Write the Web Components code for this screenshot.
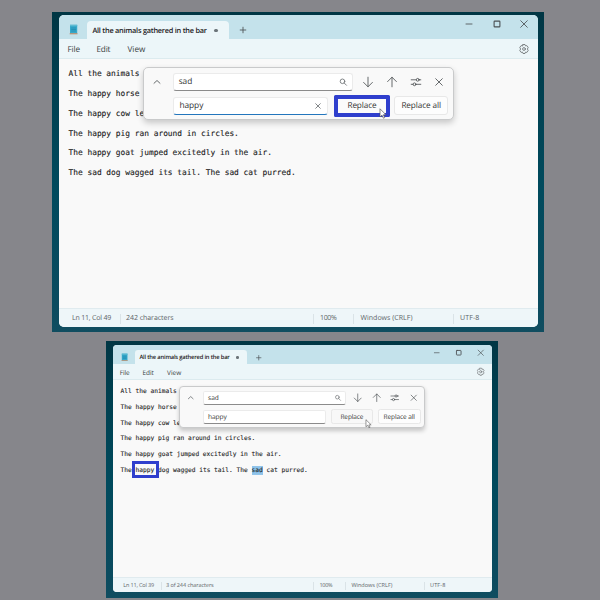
<!DOCTYPE html>
<html lang="en">
<head>
<meta charset="utf-8">
<title>Notepad replace</title>
<style>
html,body{margin:0;height:100%;overflow:hidden}
body{width:600px;height:600px;background:#86868b;font-family:"Open Sans","Noto Sans",sans-serif;display:flex;flex-direction:column;align-items:flex-start;box-sizing:border-box;padding-top:12px}
desktop-frame:nth-of-type(1){margin-left:52px}
desktop-frame:nth-of-type(2){margin:9px 0 0 106px}
</style>
</head>
<body>
<desktop-frame style="width:491.5px;height:320px;padding:3px 5px 4.5px 7px">
  <notepad-window cursor="Ln 11, Col 49" cw="39" count="242 characters" nw="47.5">
    <doc-line text="All the animals"></doc-line>
    <doc-line text="The happy horse"></doc-line>
    <doc-line text="The happy cow le"></doc-line>
    <doc-line text="The happy pig ran around in circles."></doc-line>
    <doc-line text="The happy goat jumped excitedly in the air."></doc-line>
    <doc-line text="The sad dog wagged its tail. The sad cat purred."></doc-line>
    <find-panel slot="panel" active></find-panel>
  </notepad-window>
</desktop-frame>
<desktop-frame style="width:391.5px;height:257px;padding:4.3px 5.5px 5.7px 7px">
  <notepad-window style="zoom:.791" cursor="Ln 11, Col 39" cw="39" count="3 of 244 characters" nw="60.5">
    <doc-line text="All the animals"></doc-line>
    <doc-line text="The happy horse"></doc-line>
    <doc-line text="The happy cow le"></doc-line>
    <doc-line text="The happy pig ran around in circles."></doc-line>
    <doc-line text="The happy goat jumped excitedly in the air."></doc-line>
    <doc-line text="The happy dog wagged its tail. The sad cat purred." mark="happy" select="sad"></doc-line>
    <find-panel slot="panel"></find-panel>
  </notepad-window>
</desktop-frame>
<script>
const pen = document.createElement('canvas').getContext('2d');
function shadow(el, html){ el.attachShadow({mode:'open'}).innerHTML = html; }

/* A one-line label whose tracking is set so that it fills the width w. */
customElements.define('ui-label', class extends HTMLElement {
  connectedCallback(){
    const t = this.getAttribute('text'), w = +this.getAttribute('w'),
          s = +this.getAttribute('size') || 8, wt = this.getAttribute('weight') || 400;
    pen.font = `${wt} 100px "Open Sans"`;
    const ls = (w - pen.measureText(t).width * s / 100) / t.length;
    shadow(this, `<style>:host{display:block;flex:none;width:${w}px;white-space:nowrap;line-height:12px;
      font-size:${s}px;font-weight:${wt};letter-spacing:${ls.toFixed(3)}px;text-rendering:geometricPrecision}</style>${t}`);
  }
});

const GLYPHS = {
  chevron:'<path d="M3 7.3 6 4.5 9 7.3"/>',
  search:'<circle cx="5.5" cy="5.3" r="2.3"/><path d="M7.2 7 9.5 9.3"/>',
  down:'<path d="M6 1.2V10.7M1.6 6.4 6 10.8 10.4 6.4"/>',
  up:'<path d="M6 10.8V1.3M1.6 5.6 6 1.2 10.4 5.6"/>',
  filter:'<path d="M1.2 3.8H6.2M9.2 3.8H10.8M1.2 8.3H3M6 8.3H10.8"/><circle cx="7.7" cy="3.8" r="1.4"/><circle cx="4.5" cy="8.3" r="1.4"/>',
  close:'<path d="M2.7 2.7 9.3 9.3M9.3 2.7 2.7 9.3"/>',
  clear:'<path d="M3.7 3.7 8.3 8.3M8.3 3.7 3.7 8.3"/>',
  min:'<path d="M3 6H9"/>',
  max:'<rect x="3.1" y="3.1" width="5.8" height="5.8" rx=".7" stroke-width="1.1"/>',
  plus:'<path d="M6 3.2V8.8M3.2 6H8.8"/>',
  gear:'<path d="M5 1.5 7 1.5 7.5 2.9 8.9 2.6 10.2 4.4 9.4 6 10.2 7.6 8.9 9.4 7.5 9.1 7 10.5H5L4.5 9.1 3.1 9.4 1.8 7.6 2.6 6 1.8 4.4 3.1 2.6 4.5 2.9Z"/><circle cx="6" cy="6" r="1.4"/>'
};
customElements.define('ui-icon', class extends HTMLElement {
  connectedCallback(){
    shadow(this, `<style>:host{display:block;flex:none;width:12px;height:12px;color:#4b5053}
    :host([name=clear]),:host([name=search]),:host([name=gear]){color:#6d7174}svg{display:block;width:100%;height:100%}</style>
    <svg viewBox="0 0 12 12" fill="none" stroke="currentColor" stroke-width=".85" stroke-linecap="round" stroke-linejoin="round">${GLYPHS[this.getAttribute('name')]}</svg>`);
  }
});

customElements.define('notepad-logo', class extends HTMLElement {
  connectedCallback(){
    shadow(this, `<style>:host{display:block;flex:none;width:9px;height:11px}svg{display:block}</style>
    <svg width="9" height="11" viewBox="0 0 9 11"><rect x="1" y=".8" width="7.2" height="8.6" fill="#35a9cb"/><rect x="1" y=".8" width="7.2" height="1.4" fill="#5dbbd2"/><path d="M2.2 4H7M2.2 5.5H7M2.2 7H7" stroke="#1f86ad" stroke-width=".7"/><rect x=".7" y="9.2" width="7.8" height="1.1" fill="#b98a68"/></svg>`);
  }
});

customElements.define('desktop-frame', class extends HTMLElement {
  connectedCallback(){
    shadow(this, `<style>:host{display:block;flex:none;box-sizing:border-box;
      background:linear-gradient(#003644,#003f4f 20%,#004a5d 55%,#0b4b5f 92%,#104d60)}</style><slot></slot>`);
  }
});

customElements.define('doc-line', class extends HTMLElement {
  connectedCallback(){
    let t = this.getAttribute('text');
    const m = this.getAttribute('mark'), s = this.getAttribute('select');
    if (m) t = t.replace(m, `<span class="mark">${m}</span>`);
    if (s) t = t.replace(s, `<span class="sel">${s}</span>`);
    shadow(this, `<style>:host{display:block;height:19.8px;line-height:19.8px;white-space:pre;
      font-family:"DejaVu Sans Mono",monospace;font-size:7.87px;color:#222;-webkit-text-stroke:.12px #222;text-rendering:geometricPrecision}
      .mark{position:relative}
      .mark::after{content:"";position:absolute;left:-4.6px;right:-5.8px;top:-7.2px;bottom:-5.4px;border:4px solid #2f3fcd}
      .sel{background:linear-gradient(#8dc3ea,#8dc3ea) 0 100%/100% 100% no-repeat;box-shadow:0 1.2px #8dc3ea,0 -1.2px #8dc3ea}</style>${t}`);
  }
});

customElements.define('find-panel', class extends HTMLElement {
  connectedCallback(){
    const on = this.hasAttribute('active');
    shadow(this, `<style>
    :host{display:flex;flex-direction:column;gap:${on?6:5.5}px;box-sizing:border-box;width:311px;height:53px;padding:4.5px 5px 5px;
      background:#f9f9f9;border:1px solid #c9cacb;border-radius:5px;box-shadow:0 3px 6px rgba(0,0,0,.2);color:#333}
    .row{display:flex;align-items:center;height:18px;flex:none}
    .row.top{padding-left:1.5px}
    .row.bot{padding-left:${on?24.4:23.5}px}
    .box{display:flex;align-items:center;justify-content:space-between;box-sizing:border-box;height:18px;background:#fff;
      border:1px solid #ebebeb;border-bottom-color:#8b8b8b;border-radius:3px;padding:0 3px 0 5px}
    .q{width:180.5px;margin-left:10.2px}
    .r{width:155.5px;margin-left:0}
    .r.on{border-bottom:1.6px solid #2376bd}
    .icons{display:flex;gap:11.7px;margin-left:9px}
    .btn{position:relative;display:flex;align-items:center;justify-content:center;box-sizing:border-box;height:18.5px;background:#fdfdfd;border:1px solid #e8e8e8;border-radius:3px}
    .one{width:53px;margin-left:7px;background:#f8f8f8}
    .one.on{width:57px;height:22px;margin-left:5.6px;border:4px solid #2f3fcd;border-radius:1.5px;background:#fbfbfb}
    .all{width:54px;margin-left:${on?'4':'6.5'}px}
    .cursor{position:absolute;right:${on?'-1px':'0'};bottom:${on?'-6.5px':'-7px'};width:${on?8:9}px;height:${on?11:12}px}
    </style>
    <div class="row top"><ui-icon name="chevron"></ui-icon>
      <div class="box q"><ui-label text="sad" w="13.5" size="8.3"></ui-label><ui-icon name="search"></ui-icon></div>
      <div class="icons"><ui-icon name="down"></ui-icon><ui-icon name="up"></ui-icon><ui-icon name="filter"></ui-icon><ui-icon name="close"></ui-icon></div></div>
    <div class="row bot"><div class="box r ${on?'on':''}"><ui-label text="happy" w="24" size="8.4"></ui-label>${on?'<ui-icon name="clear"></ui-icon>':''}</div>
      <div class="btn one ${on?'on':''}"><ui-label text="Replace" w="29" size="8.2"></ui-label>
        <svg class="cursor" viewBox="0 0 8 11"><path d="M1 .8V9L3 7.2 4.4 10.2 5.7 9.6 4.4 6.8H7Z" fill="#fff" stroke="#555" stroke-width=".7"/></svg></div>
      <div class="btn all"><ui-label text="Replace all" w="39.5" size="8.2"></ui-label></div></div>`);
  }
});

customElements.define('notepad-window', class extends HTMLElement {
  connectedCallback(){
    const a = n => this.getAttribute(n);
    shadow(this, `<style>
    :host{position:relative;display:flex;flex-direction:column;box-sizing:border-box;width:479px;height:312.3px;background:#f9f9f9;border-radius:5px;overflow:hidden;color:#3a3f42}
    .title{display:flex;height:24px;flex:none;background:#c4e2eb}
    notepad-logo{margin:9.3px 9.5px 0 9.7px}
    .tab{display:flex;align-items:center;box-sizing:border-box;width:141.5px;height:18px;margin-top:6px;padding:1px 0 0 5.2px;background:#ecf6f9;border-radius:4px 4px 0 0;color:#1c2023}
    .dot{width:3.4px;height:3.4px;border-radius:50%;background:#6c757a;margin-left:7.5px}
    .plus{margin:9.2px 0 0 8.7px}
    .ctl{display:flex;gap:15.8px;margin:2.8px 7.6px 0 auto}
    .menu{display:flex;align-items:center;box-sizing:border-box;height:19.6px;flex:none;background:#ecf6f9;border-bottom:1px solid #dcebef;padding:1px 8px 0 8.4px}
    .menu ui-label{position:relative;top:.9px}
    .menu ui-icon{margin-left:auto}
    .doc{flex:1;padding:5.7px 9.3px 0 9.5px}
    .status{display:flex;align-items:center;box-sizing:border-box;height:19px;flex:none;background:#eef6f9;border-top:1px solid #e0ebef;color:#5c6468;padding:1.2px 0 0 13px}
    i{display:block;width:1px;height:10px;background:#dae3e7;flex:none}
    .panel{position:absolute;left:84px;top:52px}
    </style>
    <div class="title"><notepad-logo></notepad-logo>
      <div class="tab"><ui-label text="All the animals gathered in the bar" w="114.5" size="7.35" weight="600"></ui-label><span class="dot"></span></div>
      <ui-icon class="plus" name="plus"></ui-icon>
      <div class="ctl"><ui-icon name="min"></ui-icon><ui-icon name="max"></ui-icon><ui-icon name="close"></ui-icon></div></div>
    <div class="menu"><ui-label text="File" w="12.5" size="8.2"></ui-label><ui-label style="margin-left:16.5px" text="Edit" w="14" size="8.2"></ui-label><ui-label style="margin-left:17px" text="View" w="18" size="8.2"></ui-label><ui-icon name="gear"></ui-icon></div>
    <div class="doc"><slot></slot></div>
    <div class="status"><ui-label text="${a('cursor')}" w="${a('cw')}" size="7"></ui-label><i style="margin:0 5px 0 9px"></i>
      <ui-label text="${a('count')}" w="${a('nw')}" size="7"></ui-label><i style="margin:0 6.5px 0 ${186.5-a('nw')}px"></i>
      <ui-label text="100%" w="16.5" size="7"></ui-label><i style="margin:0 6.5px 0 16.5px"></i>
      <ui-label text="Windows (CRLF)" w="52" size="7"></ui-label><i style="margin:0 6.5px 0 40px"></i>
      <ui-label text="UTF-8" w="19.5" size="7"></ui-label></div>
    <div class="panel"><slot name="panel"></slot></div>`);
  }
});
</script>
</body>
</html>
